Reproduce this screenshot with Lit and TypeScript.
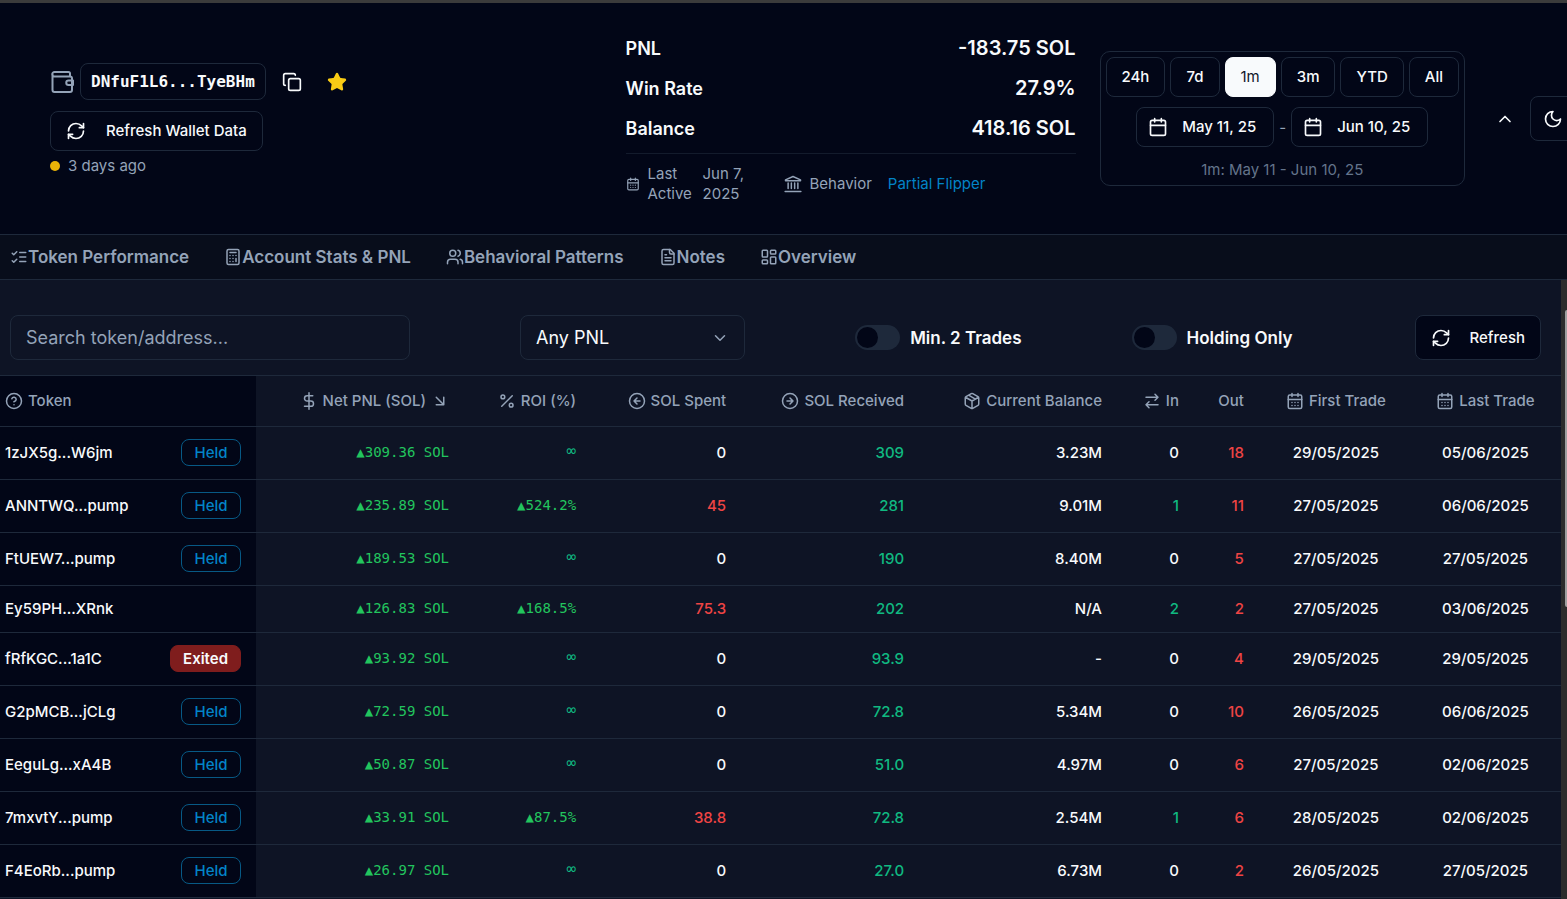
import { LitElement, html, css, svg, nothing } from "lit";
import { customElement, property, state } from "lit/decorators.js";
import { classMap } from "lit/directives/class-map.js";

const ICONS: Record<string, unknown> = {
  wallet: svg`<path d="M20 6V3.500a1.500 1.500 0 0 0-1.500-1.500H4.500a2.250 2.250 0 0 0 0 4.500H20a2 2 0 0 1 2 2V20a2 2 0 0 1-2 2H4.500a2 2 0 0 1-2-2V4"/><path d="M23 10.500h-4.500a2.250 2.250 0 0 0 0 4.500H23z"/>`,
  copy: svg`<rect x="8" y="8" width="14" height="14" rx="2"/><path d="M4 16c-1.100 0-2-.9-2-2V4c0-1.100.9-2 2-2h10c1.100 0 2 .9 2 2"/>`,
  star: svg`<path fill="currentColor" d="M11.525 2.295a.53.53 0 0 1 .95 0l2.310 4.679a2.123 2.123 0 0 0 1.595 1.160l5.166.756a.53.53 0 0 1 .294.904l-3.736 3.638a2.123 2.123 0 0 0-.611 1.878l.882 5.140a.53.53 0 0 1-.771.560l-4.618-2.428a2.122 2.122 0 0 0-1.973 0L6.396 21.010a.53.53 0 0 1-.770-.560l.881-5.139a2.122 2.122 0 0 0-.611-1.879L2.160 9.795a.53.53 0 0 1 .294-.906l5.165-.755a2.122 2.122 0 0 0 1.597-1.160z"/>`,
  refresh: svg`<path d="M3 12a9 9 0 0 1 9-9 9.750 9.750 0 0 1 6.740 2.740L21 8"/><path d="M21 3v5h-5"/><path d="M21 12a9 9 0 0 1-9 9 9.750 9.750 0 0 1-6.740-2.740L3 16"/><path d="M8 16H3v5"/>`,
  days: svg`<path d="M8 2v4M16 2v4M3 10h18"/><rect x="3" y="4" width="18" height="18" rx="2"/><path d="M8 14h.01M12 14h.01M16 14h.01M8 18h.01M12 18h.01M16 18h.01"/>`,
  calendar: svg`<path d="M8 2v4M16 2v4M3 10h18"/><rect x="3" y="4" width="18" height="18" rx="2"/>`,
  bank: svg`<path d="M2 7.500v-1L12 2l10 4.500v1z"/><path d="M5.500 10.500v7.500M9.800 10.500v7.500M14.200 10.500v7.500M18.500 10.500v7.500M1.500 22h21"/>`,
  up: svg`<path d="m18 15-6-6-6 6"/>`,
  down: svg`<path d="m6 9 6 6 6-6"/>`,
  moon: svg`<path d="M12 3a6 6 0 0 0 9 9 9 9 0 1 1-9-9Z"/>`,
  checks: svg`<path d="m3 17 2 2 4-4M3 7l2 2 4-4M13 6h8M13 12h8M13 18h8"/>`,
  calculator: svg`<rect x="4" y="2" width="16" height="20" rx="2"/><path d="M8 6h8M16 14v4M16 10h.01M12 10h.01M8 10h.01M12 14h.01M8 14h.01M12 18h.01M8 18h.01"/>`,
  users: svg`<path d="M16 21v-2a4 4 0 0 0-4-4H6a4 4 0 0 0-4 4v2"/><circle cx="9" cy="7" r="4"/><path d="M22 21v-2a4 4 0 0 0-3-3.870M16 3.130a4 4 0 0 1 0 7.750"/>`,
  file: svg`<path d="M15 2H6a2 2 0 0 0-2 2v16a2 2 0 0 0 2 2h12a2 2 0 0 0 2-2V7Z"/><path d="M14 2v4a2 2 0 0 0 2 2h4M10 9H8M16 13H8M16 17H8"/>`,
  dashboard: svg`<rect x="3" y="3" width="7" height="9" rx="1"/><rect x="14" y="3" width="7" height="5" rx="1"/><rect x="14" y="12" width="7" height="9" rx="1"/><rect x="3" y="16" width="7" height="5" rx="1"/>`,
  help: svg`<circle cx="12" cy="12" r="10"/><path d="M9.090 9a3 3 0 0 1 5.830 1c0 2-3 3-3 3M12 17h.01"/>`,
  dollar: svg`<path d="M12 1v22M17 5H9.500a3.500 3.500 0 0 0 0 7h5a3.500 3.500 0 0 1 0 7H6"/>`,
  sort: svg`<path d="m7 7 10 10M17 7v10H7"/>`,
  percent: svg`<path d="M19 5 5 19"/><circle cx="6.500" cy="6.500" r="2.500"/><circle cx="17.500" cy="17.500" r="2.500"/>`,
  left: svg`<circle cx="12" cy="12" r="10"/><path d="M16 12H8M12 8l-4 4 4 4"/>`,
  right: svg`<circle cx="12" cy="12" r="10"/><path d="M8 12h8M12 16l4-4-4-4"/>`,
  box: svg`<path d="M11 21.730a2 2 0 0 0 2 0l7-4A2 2 0 0 0 21 16V8a2 2 0 0 0-1-1.730l-7-4a2 2 0 0 0-2 0l-7 4A2 2 0 0 0 3 8v8a2 2 0 0 0 1 1.730zM12 22V12M3.290 7 12 12l8.710-5M7.500 4.270l9 5.150"/>`,
  swap: svg`<path d="m16 3 4 4-4 4M20 7H4M8 21l-4-4 4-4M4 17h16"/>`,
};

const icon = (name: string, size = "m") =>
  html`<svg class="icon ${size}" viewBox="0 0 24 24" aria-hidden="true">${ICONS[name]}</svg>`;

const shared = css`
  * { box-sizing: border-box; }
  .icon {
    display: block;
    flex: none;
    width: 18px;
    height: 18px;
    fill: none;
    stroke: currentColor;
    stroke-width: 2;
    stroke-linecap: round;
    stroke-linejoin: round;
  }
  .icon.s { width: 14px; height: 14px; }
  .icon.l { width: 20px; height: 20px; }
  .icon.xl { width: 24px; height: 24px; }
  button, input, select { font: inherit; color: inherit; margin: 0; }
  button {
    display: inline-flex;
    align-items: center;
    justify-content: center;
    padding: 0;
    border: 0;
    background: none;
    white-space: nowrap;
    cursor: pointer;
  }
  .outline {
    height: 40px;
    padding: 0 15px;
    border: 1px solid #1e293b;
    border-radius: 8px;
    background: #020617;
    color: #f8fafc;
    font-size: 15px;
    line-height: 20px;
    font-weight: 500;
  }
`;

@customElement("wallet-header")
class WalletHeader extends LitElement {
  @state() private range = "1m";

  static styles = [
    shared,
    css`
      :host {
        display: grid;
        grid-template-columns: minmax(0, 1fr) 450px auto auto;
        column-gap: 24px;
        padding: 25px 0 30px 50px;
        background: #020617;
        overflow: hidden;
      }
      .wallet { display: flex; flex-direction: column; align-items: flex-start; padding-top: 35px; }
      .address { display: flex; align-items: center; gap: 6px; color: #94a3b8; }
      .code {
        padding: 8px 10px;
        border: 1px solid #1e293b;
        border-radius: 8px;
        color: #f8fafc;
        font: 700 16px/19px "DejaVu Sans Mono", monospace;
      }
      .plain { width: 40px; height: 36px; color: #f8fafc; }
      .plain.fav { color: #facc15; }
      .wide { gap: 20px; margin-top: 11px; }
      .actions { display: flex; gap: 5px; }
      .age { display: flex; align-items: center; gap: 8px; margin-top: 5px; color: #94a3b8; font-size: 15px; line-height: 20px; }
      .dot { width: 10px; height: 10px; border-radius: 5px; background: #eab308; }
      dl { margin: 0; }
      dt, dd { margin: 0; }
      .stat { display: flex; justify-content: space-between; align-items: center; height: 40px; }
      .stat dt { font-size: 18px; font-weight: 600; }
      .stat dd { font-size: 20px; font-weight: 600; }
      .meta { display: flex; align-items: center; margin-top: 5px; padding-top: 10px; border-top: 1px solid #131b2c; color: #94a3b8; font-size: 15px; line-height: 20px; }
      .meta .active { display: flex; align-items: center; gap: 8px; width: 158px; }
      .meta .label { width: 47px; }
      .meta .date { width: 50px; }
      .meta .behavior { display: flex; align-items: center; gap: 8px; }
      .meta a { margin-left: 8px; color: #0284c7; text-decoration: none; }
      .card { align-self: start; margin-top: 23px; padding: 5px; border: 1px solid #1e293b; border-radius: 10px; text-align: center; }
      .row { display: flex; justify-content: center; align-items: center; gap: 5px; }
      .dates { margin-top: 10px; color: #94a3b8; }
      .dates .outline { gap: 14px; padding: 0 17px 0 11px; }
      .active-range { background: #f8fafc; border-color: #f8fafc; color: #0f172a; font-weight: 400; }
      .summary { margin: 13px 0 0; color: #64748b; font-size: 15px; line-height: 20px; }
      .tools { display: flex; align-items: center; align-self: start; gap: 15px; margin: 68px -8px 0 6px; }
      .theme { width: 45px; height: 45px; }
      .fold { color: #f8fafc; }
    `,
  ];

  render() {
    const ranges = ["24h", "7d", "1m", "3m", "YTD", "All"];
    return html`
      <section class="wallet">
        <div class="address">
          ${icon("wallet", "xl")}
          <span class="code">DNfuF1L6...TyeBHm</span>
          <span class="actions">
            <button class="plain" aria-label="Copy address">${icon("copy", "l")}</button>
            <button class="plain fav" aria-label="Favorite">${icon("star", "l")}</button>
          </span>
        </div>
        <button class="outline wide">${icon("refresh", "l")}Refresh Wallet Data</button>
        <div class="age"><span class="dot"></span>3 days ago</div>
      </section>
      <section>
        <dl>
          <div class="stat"><dt>PNL</dt><dd>-183.75 SOL</dd></div>
          <div class="stat"><dt>Win Rate</dt><dd>27.9%</dd></div>
          <div class="stat"><dt>Balance</dt><dd>418.16 SOL</dd></div>
        </dl>
        <div class="meta">
          <div class="active">${icon("days", "s")}<span class="label">Last Active</span><span class="date">Jun 7, 2025</span></div>
          <div class="behavior">${icon("bank")}<span>Behavior</span><a href="#behavior">Partial Flipper</a></div>
        </div>
      </section>
      <section class="card">
        <div class="row">
          ${ranges.map(
            (r) => html`<button
              class=${classMap({ outline: true, "active-range": r === this.range })}
              aria-pressed=${r === this.range}
              @click=${() => (this.range = r)}
            >${r}</button>`
          )}
        </div>
        <div class="row dates">
          <button class="outline">${icon("calendar", "l")}May 11, 25</button>
          <span>-</span>
          <button class="outline">${icon("calendar", "l")}Jun 10, 25</button>
        </div>
        <p class="summary">1m: May 11 - Jun 10, 25</p>
      </section>
      <section class="tools">
        <button class="fold" aria-label="Collapse">${icon("up", "l")}</button>
        <button class="outline theme" aria-label="Toggle theme">${icon("moon", "l")}</button>
      </section>
    `;
  }
}

@customElement("tab-bar")
class TabBar extends LitElement {
  static styles = [
    shared,
    css`
      nav {
        display: flex;
        gap: 35px;
        padding: 0 10px;
        border: 1px solid #1e293b;
        border-width: 1px 0;
        background: #080d1b;
      }
      a { display: flex; align-items: center; height: 44px; color: #94a3b8; font-size: 17px; line-height: 22px; font-weight: 600; text-decoration: none; white-space: nowrap; }
    `,
  ];
  render() {
    const tabs = [
      ["checks", "Token Performance"],
      ["calculator", "Account Stats & PNL"],
      ["users", "Behavioral Patterns"],
      ["file", "Notes"],
      ["dashboard", "Overview"],
    ];
    return html`<nav>${tabs.map(([i, t]) => html`<a href="#${i}">${icon(i)}${t}</a>`)}</nav>`;
  }
}

@customElement("filter-bar")
class FilterBar extends LitElement {
  static styles = [
    shared,
    css`
      :host { display: flex; align-items: center; justify-content: space-between; padding: 35px 20px 15px 10px; }
      .field { height: 45px; padding: 0 15px; border: 1px solid #1e293b; border-radius: 8px; background: transparent; font-size: 18px; }
      .search { width: 400px; }
      .search::placeholder { color: #94a3b8; opacity: 1; }
      .pick { display: grid; align-items: center; width: 225px; }
      .pick > * { grid-area: 1 / 1; }
      .pick select { width: 100%; appearance: none; }
      .pick .icon { justify-self: end; margin-right: 16px; color: #94a3b8; pointer-events: none; }
      .switch { display: flex; align-items: center; gap: 10px; font-size: 17px; font-weight: 600; white-space: nowrap; }
      .switch:last-of-type { padding-right: 12px; }
      .switch input { appearance: none; display: flex; align-items: center; width: 45px; height: 25px; padding: 2px; border-radius: 13px; background: #1e293b; }
      .switch input::before { content: ""; width: 21px; height: 21px; border-radius: 11px; background: #020617; }
      .switch input:checked { justify-content: flex-end; background: #0284c7; }
      .reload { gap: 19px; height: 45px; }
    `,
  ];
  render() {
    return html`
      <input class="field search" type="search" aria-label="Search token or address" placeholder="Search token/address..." />
      <div class="pick">
        <select class="field" aria-label="PNL filter"><option>Any PNL</option></select>
        ${icon("down")}
      </div>
      <label class="switch"><input type="checkbox" />Min. 2 Trades</label>
      <label class="switch"><input type="checkbox" />Holding Only</label>
      <button class="outline reload">${icon("refresh", "l")}Refresh</button>
    `;
  }
}

type Row = [string, string, string, string, string, string, string, string, string, string, string];
const ROWS: Row[] = [
  ["1zJX5g...W6jm", "Held", "309.36", "", "0", "309", "3.23M", "0", "18", "29/05/2025", "05/06/2025"],
  ["ANNTWQ...pump", "Held", "235.89", "524.2%", "45", "281", "9.01M", "1", "11", "27/05/2025", "06/06/2025"],
  ["FtUEW7...pump", "Held", "189.53", "", "0", "190", "8.40M", "0", "5", "27/05/2025", "27/05/2025"],
  ["Ey59PH...XRnk", "", "126.83", "168.5%", "75.3", "202", "N/A", "2", "2", "27/05/2025", "03/06/2025"],
  ["fRfKGC...1a1C", "Exited", "93.92", "", "0", "93.9", "-", "0", "4", "29/05/2025", "29/05/2025"],
  ["G2pMCB...jCLg", "Held", "72.59", "", "0", "72.8", "5.34M", "0", "10", "26/05/2025", "06/06/2025"],
  ["EeguLg...xA4B", "Held", "50.87", "", "0", "51.0", "4.97M", "0", "6", "27/05/2025", "02/06/2025"],
  ["7mxvtY...pump", "Held", "33.91", "87.5%", "38.8", "72.8", "2.54M", "1", "6", "28/05/2025", "02/06/2025"],
  ["F4EoRb...pump", "Held", "26.97", "", "0", "27.0", "6.73M", "0", "2", "26/05/2025", "27/05/2025"],
];

@customElement("token-table")
class TokenTable extends LitElement {
  @property({ attribute: false }) rows: Row[] = ROWS;

  static styles = [
    shared,
    css`
      :host { display: block; }
      table { width: 100%; table-layout: fixed; border-collapse: separate; border-spacing: 0; font-size: 15px; line-height: 20px; }
      .c-token { width: 16.4%; }
      .c-pnl { width: 13.52%; }
      .c-roi { width: 8.14%; }
      .c-spent { width: 9.61%; }
      .c-recv { width: 11.4%; }
      .c-bal { width: 12.68%; }
      .c-in { width: 4.93%; }
      .c-out { width: 4.16%; }
      .c-first { width: 9.48%; }
      th, td { padding: 0 18px 0 0; text-align: right; white-space: nowrap; font-weight: 500; border-bottom: 1px solid #1e293b; }
      thead th { height: 52px; border-top: 1px solid #1e293b; color: #94a3b8; }
      thead button { gap: 5px; font-weight: 500; vertical-align: middle; }
      tbody th, tbody td { height: 53px; }
      tbody .short > * { height: 47px; }
      .token { padding: 0 15px 0 5px; background: #020617; text-align: left; }
      tbody .token { padding-bottom: 1px; }
      .name { display: flex; align-items: center; justify-content: space-between; }
      .date { padding: 0; text-align: center; }
      .tag { min-width: 60px; padding: 3px 12px 2px; border: 1px solid #075985; border-radius: 8px; color: #0284c7; text-align: center; }
      .tag.exited { border-color: #7f1d1d; background: #7f1d1d; color: #f8fafc; font-weight: 600; }
      .mono { padding-bottom: 2px; font-family: "DejaVu Sans Mono", monospace; font-size: 14px; font-weight: 400; color: #22c55e; }
      .gain { color: #10b981; }
      .endless { padding-bottom: 4px; font-size: 16px; }
      .loss { color: #ef4444; }
    `,
  ];

  render() {
    const heads: [string, string, string][] = [
      ["token", "help", "Token"], ["", "dollar", "Net PNL (SOL)"], ["", "percent", "ROI (%)"], ["", "left", "SOL Spent"],
      ["", "right", "SOL Received"], ["", "box", "Current Balance"], ["", "swap", "In"], ["", "", "Out"],
      ["date", "days", "First Trade"], ["date", "days", "Last Trade"],
    ];
    const cols = ["token", "pnl", "roi", "spent", "recv", "bal", "in", "out", "first", "last"];
    return html`<table>
      <colgroup>${cols.map((c) => html`<col class="c-${c}" />`)}</colgroup>
      <thead>
        <tr>
          ${heads.map(
            ([cls, i, t]) => html`<th class=${cls} scope="col"><button>${i ? icon(i) : nothing}${t}${i === "dollar" ? icon("sort") : nothing}</button></th>`
          )}
        </tr>
      </thead>
      <tbody>
        ${this.rows.map(
          ([name, tag, pnl, roi, spent, recv, bal, inn, out, first, last]) => html`<tr class=${tag ? "" : "short"}>
            <th class="token" scope="row">
              <div class="name">${name}${tag ? html`<span class="tag ${tag.toLowerCase()}">${tag}</span>` : nothing}</div>
            </th>
            <td class="mono">▲${pnl} SOL</td>
            <td class="mono ${roi ? "" : "gain endless"}">${roi ? `▲${roi}` : "∞"}</td>
            <td class=${spent === "0" ? "" : "loss"}>${spent}</td>
            <td class="gain">${recv}</td>
            <td>${bal}</td>
            <td class=${inn === "0" ? "" : "gain"}>${inn}</td>
            <td class="loss">${out}</td>
            <td class="date">${first}</td>
            <td class="date">${last}</td>
          </tr>`
        )}
      </tbody>
    </table>`;
  }
}

@customElement("app-root")
class AppRoot extends LitElement {
  static styles = css`
    :host {
      display: flex;
      flex-direction: column;
      height: 100vh;
      overflow: hidden;
      border-top: 3px solid #3b3b3b;
      box-sizing: border-box;
      background: #0e1425;
      color: #f8fafc;
      font-family: Inter, sans-serif;
      font-size: 15px;
    }
    .body { display: flex; flex: 1; min-height: 0; }
    main { flex: 1; min-width: 0; overflow: hidden; }
    .scroll { box-sizing: border-box; width: 6px; padding: 30px 0 0 4px; background: #2c2c2c; }
    .thumb { height: 297px; border-radius: 6px 0 0 6px; background: #9f9f9f; }
  `;
  render() {
    return html`
      <wallet-header></wallet-header>
      <tab-bar></tab-bar>
      <div class="body">
        <main>
          <filter-bar></filter-bar>
          <token-table></token-table>
        </main>
        <div class="scroll"><div class="thumb"></div></div>
      </div>
    `;
  }
}
